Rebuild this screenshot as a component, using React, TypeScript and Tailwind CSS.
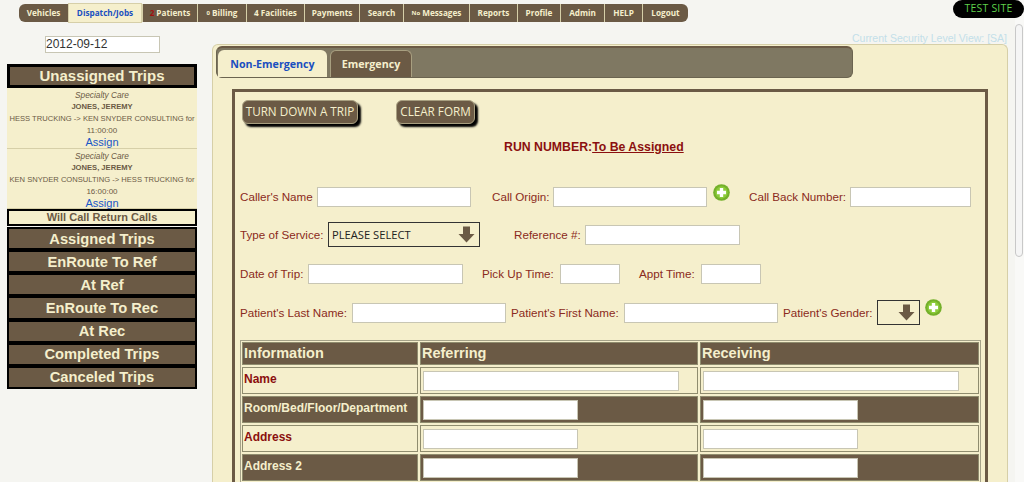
import React from "react";

const navItems: { label: string; w: number; prefix?: string; prefixCls?: string; active?: boolean }[] = [
  { label: "Vehicles", w: 49 },
  { label: "Dispatch/Jobs", w: 74, active: true },
  { label: "Patients", w: 55, prefix: "2", prefixCls: "text-[#a01010]" },
  { label: "Billing", w: 49, prefix: "0", prefixCls: "text-[6px]" },
  { label: "Facilities", w: 58, prefix: "4" },
  { label: "Payments", w: 55 },
  { label: "Search", w: 44 },
  { label: "Messages", w: 66, prefix: "No", prefixCls: "text-[6px]" },
  { label: "Reports", w: 48 },
  { label: "Profile", w: 43 },
  { label: "Admin", w: 44 },
  { label: "HELP", w: 38 },
  { label: "Logout", w: 46 },
];

const statusItems = ["Assigned Trips", "EnRoute To Ref", "At Ref", "EnRoute To Rec", "At Rec", "Completed Trips", "Canceled Trips"];

function Plus() {
  return (
    <svg width="17" height="17" viewBox="0 0 18 18">
      <circle cx="9" cy="9" r="8.8" fill="#74b02a" />
      <circle cx="9" cy="9" r="6.5" fill="#8ccb3a" />
      <path d="M7.2 4.2h3.6v3h3v3.6h-3v3H7.2v-3h-3V7.2h3z" fill="#fff" />
    </svg>
  );
}

function Arrow() {
  return (
    <svg width="17" height="17" viewBox="0 0 17 17">
      <path d="M5 .5h7v7.5h4.5L8.5 16.5 .5 8H5z" fill="#6b5a45" />
    </svg>
  );
}

function Field({ w }: { w: string }) {
  return <div className={`h-5 bg-white border border-[#c8c6b4] ${w}`} />;
}

function Card({ route, time, h }: { route: string; time: string; h: string }) {
  return (
    <div className={`flex flex-col items-center bg-[#f5efcc] text-[#6b5a45] text-[7.6px] leading-[12px] pt-[1px] border-b border-[#d6cfa8] whitespace-nowrap ${h}`}>
      <div className="italic text-[8.3px]">Specialty Care</div>
      <div className="font-bold">JONES, JEREMY</div>
      <div>{route}</div>
      <div className="text-[8px]">{time}</div>
      <div className="text-[11px] leading-[11px] text-[#1a56c8]">Assign</div>
    </div>
  );
}

function Row({ label, dark, wide }: { label: string; dark?: boolean; wide?: boolean }) {
  const cell = `h-[27px] border border-[#8f8c6e] flex items-center ${dark ? "bg-[#6b5a45]" : "bg-[#f5efcc]"}`;
  const w = wide ? "w-[256px]" : "w-[155px]";
  return (
    <>
      <div className={`${cell} pl-[1px] pb-[3px] text-xs font-bold ${dark ? "text-[#f5efcc]" : "text-[#8b0f0f]"}`}>{label}</div>
      <div className={`${cell} pl-[2px]`}><Field w={w} /></div>
      <div className={`${cell} pl-[2px]`}><Field w={w} /></div>
    </>
  );
}

function Head({ children }: { children: string }) {
  return <div className="bg-[#6b5a45] h-[23px] border border-[#8f8c6e] flex items-center pl-[1px] text-[14.5px] font-bold text-[#f5efcc]">{children}</div>;
}

export default function App() {
  return (
    <div className="relative flex w-[1024px] h-[482px] overflow-hidden bg-[#f5f5f1] font-['Liberation_Sans',Arial,sans-serif]">
      <div className="absolute right-0 top-0 w-[71px] h-[18px] rounded-full bg-black text-[#5ed04a] text-[10.5px] flex items-center justify-center font-['Open_Sans',sans-serif] tracking-[0.2px]">TEST SITE</div>

      <div className="w-[1015px] flex flex-col">
        <div className="pl-[19px] pt-[4px] h-[22px]">
          <div className="flex h-[18px] w-max rounded-[6px] bg-[#6b5a45] font-['Open_Sans',sans-serif] text-[8.2px] font-bold text-[#f5efcc]">
            {navItems.map((n, i) => (
              <div
                key={n.label}
                style={{ width: n.w }}
                className={`flex items-center justify-center gap-[2px] whitespace-nowrap ${i ? "border-l border-[#d6cfa8]" : ""} ${n.active ? "bg-[#f5efcc] text-[#1a4fc0] border border-[#cfc79c] h-[20px] -mt-[1px]" : ""}`}
              >
                {n.prefix && <span className={n.prefixCls}>{n.prefix}</span>}
                <span>{n.label}</span>
              </div>
            ))}
          </div>
        </div>

        <div className="flex flex-1 min-h-0 pl-[7px]">
          <aside className="w-[190px] mr-[15px] shrink-0">
            <div className="pl-[38px] pt-[14px] h-[42px]">
              <div className="w-[115px] h-[17px] bg-white border border-[#c8c6b4] text-xs leading-[15px] text-[#333]">2012-09-12</div>
            </div>
            <div className="h-[24px] border-[3px] border-black bg-[#6b5a45] text-[#f5efcc] text-[15px] font-bold flex items-center justify-center">Unassigned Trips</div>
            <Card h="h-[61px]" route="HESS TRUCKING -> KEN SNYDER CONSULTING for" time="11:00:00" />
            <Card h="h-[60px]" route="KEN SNYDER CONSULTING -> HESS TRUCKING for" time="16:00:00" />
            <div className="h-[17px] mb-[1px] border-2 border-black bg-[#f5efcc] text-[#6b5a45] text-[11px] font-bold flex items-center justify-center">Will Call Return Calls</div>
            {statusItems.map((s) => (
              <div key={s} className="h-[23.15px] border-2 border-black bg-[#6b5a45] text-[#f5efcc] text-[14.7px] font-bold flex items-center justify-center">{s}</div>
            ))}
          </aside>

          <main className="flex flex-col w-[796px]">
            <div className="h-[22px] pr-[1px] text-right text-[10.5px] leading-[14px] pt-[9px] text-[#c3dfe9] whitespace-nowrap">Current Security Level View: [SA]</div>
            <div className="flex-1 min-h-0 bg-[#f5efcc] border border-[#d6cfa8] border-b-0 rounded-t-[6px] pt-[1px] pl-[3px]">
              <div className="flex items-end w-[637px] h-[32px] bg-[#7f7862] border border-[#6b6450] border-t-2 border-t-[#6b5a45] rounded-[6px] pl-[1px] gap-[3px] font-['Open_Sans',sans-serif] text-[10.7px] font-bold">
                <div className="w-[109px] h-[27px] pt-[1px] bg-[#f5efcc] text-[#1a4fc0] rounded-t-[6px] flex items-center justify-center">Non-Emergency</div>
                <div className="w-[82px] h-[27px] bg-[#6b5a45] text-[#f5efcc] border border-b-0 border-[#a89f80] rounded-t-[6px] flex items-center justify-center">Emergency</div>
              </div>

              <div className="ml-[16px] mt-[11px] w-[756px] h-[500px] border-[3px] border-[#6b5a45] pl-[5px] pt-[8px]">
                <div className="flex gap-[38px] pl-[2px] h-[25px] font-['Open_Sans',sans-serif] text-[11.7px] text-[#f5efcc]">
                  <div className="w-[116px] h-[24px] rounded-[6px] bg-[#6b5a45] border border-[#a89f80] shadow-[3px_3px_2px_#000] flex items-center justify-center whitespace-nowrap">TURN DOWN A TRIP</div>
                  <div className="w-[79px] h-[24px] rounded-[6px] bg-[#6b5a45] border border-[#a89f80] shadow-[3px_3px_2px_#000] flex items-center justify-center whitespace-nowrap">CLEAR FORM</div>
                </div>

                <div className="mt-[14px] h-[16px] pl-[264px] text-[12.3px] leading-[16px] font-bold text-[#8b0f0f] whitespace-nowrap">
                  RUN NUMBER:<span className="underline">To Be Assigned</span>
                </div>

                <div className="flex flex-col text-[11.65px] text-[#8b2a20] whitespace-nowrap">
                  <div className="flex items-center h-[20px] mt-[32px]">
                    <span className="w-[73px]">Caller's Name</span>
                    <div className="ml-[4px]"><Field w="w-[154px]" /></div>
                    <span className="ml-[21px] w-[56px]">Call Origin:</span>
                    <div className="ml-[5px]"><Field w="w-[154px]" /></div>
                    <div className="ml-[6px] -mt-[9px]"><Plus /></div>
                    <span className="ml-[19px] w-[96px]">Call Back Number:</span>
                    <div className="ml-[5px]"><Field w="w-[121px]" /></div>
                  </div>

                  <div className="flex items-center h-[25px] mt-[15px]">
                    <span className="w-[83px]">Type of Service:</span>
                    <div className="ml-[5px] w-[152px] h-[25px] border border-[#333] flex items-center justify-between pl-[3px] pr-[4px] font-['Open_Sans',sans-serif] text-[11.2px] text-[#222]">
                      <span className="mt-[2px]">PLEASE SELECT</span>
                      <Arrow />
                    </div>
                    <span className="ml-[34px] w-[67px]">Reference #:</span>
                    <div className="ml-[4px]"><Field w="w-[155px]" /></div>
                  </div>

                  <div className="flex items-center h-[20px] mt-[17px]">
                    <span className="w-[63px]">Date of Trip:</span>
                    <div className="ml-[5px]"><Field w="w-[155px]" /></div>
                    <span className="ml-[19px] w-[74px]">Pick Up Time:</span>
                    <div className="ml-[4px]"><Field w="w-[60px]" /></div>
                    <span className="ml-[19px] w-[58px]">Appt Time:</span>
                    <div className="ml-[4px]"><Field w="w-[60px]" /></div>
                  </div>

                  <div className="flex items-center h-[25px] mt-[16px]">
                    <span className="w-[107px]">Patient's Last Name:</span>
                    <div className="ml-[5px]"><Field w="w-[154px]" /></div>
                    <span className="ml-[5px] w-[108px]">Patient's First Name:</span>
                    <div className="ml-[5px]"><Field w="w-[154px]" /></div>
                    <span className="ml-[5px] w-[90px]">Patient's Gender:</span>
                    <div className="ml-[4px] w-[43px] h-[25px] border border-[#333] flex items-center justify-end pr-[4px]"><Arrow /></div>
                    <div className="ml-[5px] -mt-[10px]"><Plus /></div>
                  </div>
                </div>

                <div className="mt-[15px] grid grid-cols-[176px_278px_279px] gap-[2px] w-[741px] border border-[#a5a288] p-[1px] bg-[#f5efcc]">
                  <Head>Information</Head>
                  <Head>Referring</Head>
                  <Head>Receiving</Head>
                  <Row label="Name" wide />
                  <Row label="Room/Bed/Floor/Department" dark />
                  <Row label="Address" />
                  <Row label="Address 2" dark />
                </div>
              </div>
            </div>
          </main>
        </div>
      </div>

      <div className="w-[9px] bg-[#f9f9f7] pt-[24px]">
        <div className="w-[8px] h-[233px] rounded-full bg-[#f5f5f5] border border-[#c8c8c8]" />
      </div>
    </div>
  );
}
